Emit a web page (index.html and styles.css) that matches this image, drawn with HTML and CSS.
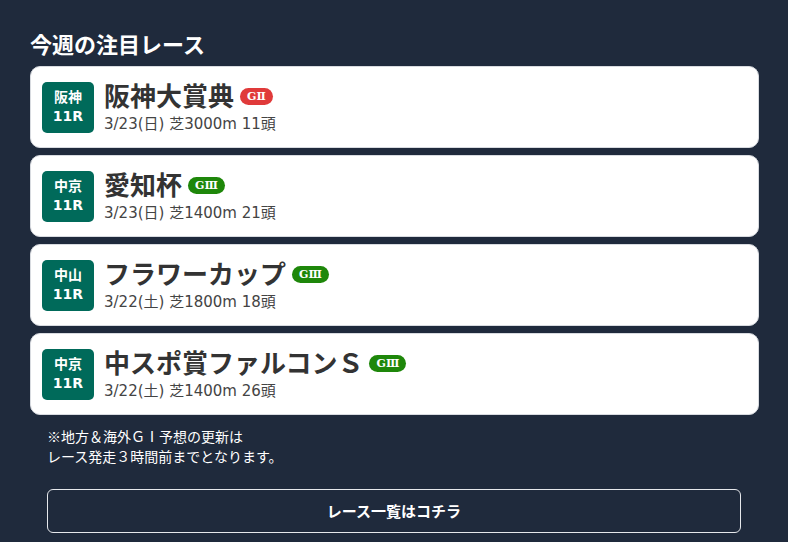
FILE: index.html
```html
<!DOCTYPE html>
<html lang="ja">
<head>
  <meta charset="UTF-8">
  <title>今週の注目レース</title>
  <link rel="stylesheet" href="styles.css">
</head>
<body>
  <div class="wrap">
    <h2 class="title">今週の注目レース</h2>

    <div class="race-list">
      <div class="race">
        <div class="place">阪神<br>11R</div>
        <div class="info">
          <div class="name">阪神大賞典 <span class="grade g2">GⅡ</span></div>
          <div class="detail">3/23(日) 芝3000m 11頭</div>
        </div>
      </div>
      <div class="race">
        <div class="place">中京<br>11R</div>
        <div class="info">
          <div class="name">愛知杯 <span class="grade g3">GⅢ</span></div>
          <div class="detail">3/23(日) 芝1400m 21頭</div>
        </div>
      </div>
      <div class="race">
        <div class="place">中山<br>11R</div>
        <div class="info">
          <div class="name">フラワーカップ <span class="grade g3">GⅢ</span></div>
          <div class="detail">3/22(土) 芝1800m 18頭</div>
        </div>
      </div>
      <div class="race">
        <div class="place">中京<br>11R</div>
        <div class="info">
          <div class="name">中スポ賞ファルコンＳ <span class="grade g3">GⅢ</span></div>
          <div class="detail">3/22(土) 芝1400m 26頭</div>
        </div>
      </div>
    </div>

    <p class="note">※地方＆海外ＧⅠ予想の更新は<br>レース発走３時間前までとなります。</p>

    <a class="more" href="#">レース一覧はコチラ</a>
  </div>
</body>
</html>
```

FILE: styles.css
```css
body {
  margin: 0;
  background-color: #1f2a3c;
  font-family: "Noto Sans CJK JP", "Noto Sans", sans-serif;
  color: #333;
}

.wrap {
  padding: 27px 29px 10px 30px;
}

.title {
  margin: 0 0 7px;
  font-size: 22px;
  line-height: 32px;
  color: #fff;
  font-weight: bold;
}

.race-list {
  display: flex;
  flex-direction: column;
  gap: 7px;
}

.race {
  display: flex;
  align-items: center;
  gap: 10px;
  height: 82px;
  box-sizing: border-box;
  padding: 0 11px;
  background-color: #fff;
  border: 1px solid #d8dbe0;
  border-radius: 10px;
}

.place {
  width: 52px;
  height: 51px;
  flex-shrink: 0;
  display: flex;
  align-items: center;
  justify-content: center;
  text-align: center;
  background-color: #006a5a;
  border-radius: 5px;
  color: #fff;
  font-family: "DejaVu Sans", "Noto Sans CJK JP", sans-serif;
  font-weight: bold;
  font-size: 14px;
  line-height: 19px;
}

.info {
  display: flex;
  flex-direction: column;
}

.name {
  display: flex;
  align-items: center;
  gap: 6px;
  font-size: 26px;
  font-weight: bold;
  line-height: 32px;
  color: #333;
}

.grade {
  display: inline-block;
  height: 17px;
  padding: 0 7px;
  border-radius: 9px;
  color: #fff;
  font-family: "DejaVu Serif", "Liberation Serif", serif;
  font-size: 11px;
  font-weight: bold;
  line-height: 17px;
  margin-top: 2px;
}

.g2 {
  background-color: #e03a3a;
}

.g3 {
  background-color: #1e870a;
}

.detail {
  margin-top: 2px;
  font-family: "DejaVu Sans", "Noto Sans CJK JP", sans-serif;
  font-size: 15px;
  line-height: 22px;
  color: #444;
}

.note {
  margin: 11px 0 0 17px;
  font-size: 14px;
  line-height: 20px;
  color: #fff;
}

.more {
  display: block;
  margin: 23px 18px 0 17px;
  height: 44px;
  box-sizing: border-box;
  border: 1px solid #e6e8ec;
  border-radius: 6px;
  color: #fff;
  font-size: 15px;
  font-weight: bold;
  line-height: 42px;
  text-align: center;
  text-decoration: none;
}
```
